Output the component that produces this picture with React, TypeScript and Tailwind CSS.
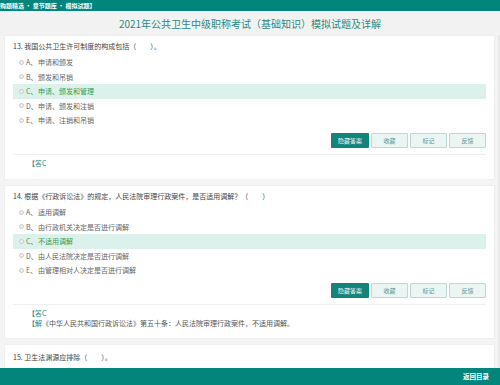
import React from "react";

const FONT = { fontFamily: '"Noto Sans CJK SC", "Noto Sans", sans-serif' };

type Opt = { k: string; t: string; on?: boolean };

function Radio() {
  return <span className="inline-block w-[5px] h-[5px] rounded-full border border-[#c9c9c9] bg-[#efefef] mr-[2px]" />;
}

function Options({ opts }: { opts: Opt[] }) {
  return (
    <div className="mt-[3px] flex flex-col">
      {opts.map((o) => (
        <div
          key={o.k}
          className={
            "h-[14.5px] flex items-center pl-[6px] mr-[8px] text-[7px] " +
            (o.on ? "bg-[#dcf1eb] text-[#3d9a4c]" : "text-[#666]")
          }
        >
          <Radio />
          <span className="w-[12px] shrink-0">{o.k}、</span>
          <span>{o.t}</span>
        </div>
      ))}
    </div>
  );
}

function Buttons() {
  return (
    <div className="mt-[5.5px] pb-[6px] mr-[8px] border-b border-[#efefef] flex justify-end gap-[2px]">
      <div className="w-[38px] h-[15px] bg-[#12847c] text-white text-[6px] flex items-center justify-center rounded-[1px]">隐藏答案</div>
      {["收藏", "标记", "反馈"].map((b) => (
        <div key={b} className="w-[37px] h-[15px] bg-[#ebf5f3] border border-[#bcd9d5] text-[#5b948e] text-[6px] flex items-center justify-center rounded-[1px]">
          {b}
        </div>
      ))}
    </div>
  );
}

export default function App() {
  return (
    <div className="w-[500px] h-[385px] bg-[#f4f4f4] overflow-hidden flex flex-col" style={FONT}>
      <div className="h-[11px] shrink-0 bg-[#04857c] text-white text-[6px] leading-[11px] font-bold whitespace-nowrap">
        购题精选 • 章节题库 • 模拟试题】
      </div>
      <div className="h-[24px] shrink-0 bg-[#f2f2f2] flex items-center justify-center text-[#2b8a83] text-[10px]">
        2021年公共卫生中级职称考试（基础知识）模拟试题及详解
      </div>
      <div className="flex-1 overflow-hidden pl-[4px] pr-[3px] flex flex-col gap-[5px] border-r-[2px] border-[#e9e9e9]">
        <div className="bg-white border border-[#efefef] pl-[8px] pt-[4px] pb-[11px] shrink-0">
          <div className="h-[12px] flex items-center text-[7px] text-[#444]">13. 我国公共卫生许可制度的构成包括（　　）。</div>
          <Options
            opts={[
              { k: "A", t: "申请和颁发" },
              { k: "B", t: "颁发和吊销" },
              { k: "C", t: "申请、颁发和管理", on: true },
              { k: "D", t: "申请、颁发和注销" },
              { k: "E", t: "申请、注销和吊销" },
            ]}
          />
          <Buttons />
          <div className="pl-[15px] pt-[3px] text-[7px] text-[#2b8a83] h-[13px] leading-[10px]">
            <span className="font-bold">【</span>答C
          </div>
        </div>
        <div className="bg-white border border-[#efefef] pl-[8px] pt-[4px] pb-[10px] shrink-0">
          <div className="h-[12px] flex items-center text-[7px] text-[#444]">14. 根据《行政诉讼法》的规定，人民法院审理行政案件，是否适用调解？（　　）</div>
          <Options
            opts={[
              { k: "A", t: "适用调解" },
              { k: "B", t: "由行政机关决定是否进行调解" },
              { k: "C", t: "不适用调解", on: true },
              { k: "D", t: "由人民法院决定是否进行调解" },
              { k: "E", t: "由管理相对人决定是否进行调解" },
            ]}
          />
          <Buttons />
          <div className="pl-[15px] pt-[3px] text-[7px] leading-[10px]">
            <div className="text-[#2b8a83]"><span className="font-bold">【</span>答C</div>
            <div className="text-[#555]"><span className="text-[#2b8a83] font-bold">【</span><span className="text-[#2b8a83]">解</span>《中华人民共和国行政诉讼法》第五十条：人民法院审理行政案件，不适用调解。</div>
          </div>
        </div>
        <div className="bg-white border border-[#efefef] pl-[8px] pt-[6px] shrink-0 h-[40px]">
          <div className="h-[12px] flex items-center text-[7px] text-[#444]">15. 卫生法渊源应排除（　　）。</div>
        </div>
      </div>
      <div className="h-[17px] shrink-0 bg-[#04857c] flex items-center justify-end pr-[11px] text-white text-[6.5px] font-bold">
        返回目录
      </div>
    </div>
  );
}
